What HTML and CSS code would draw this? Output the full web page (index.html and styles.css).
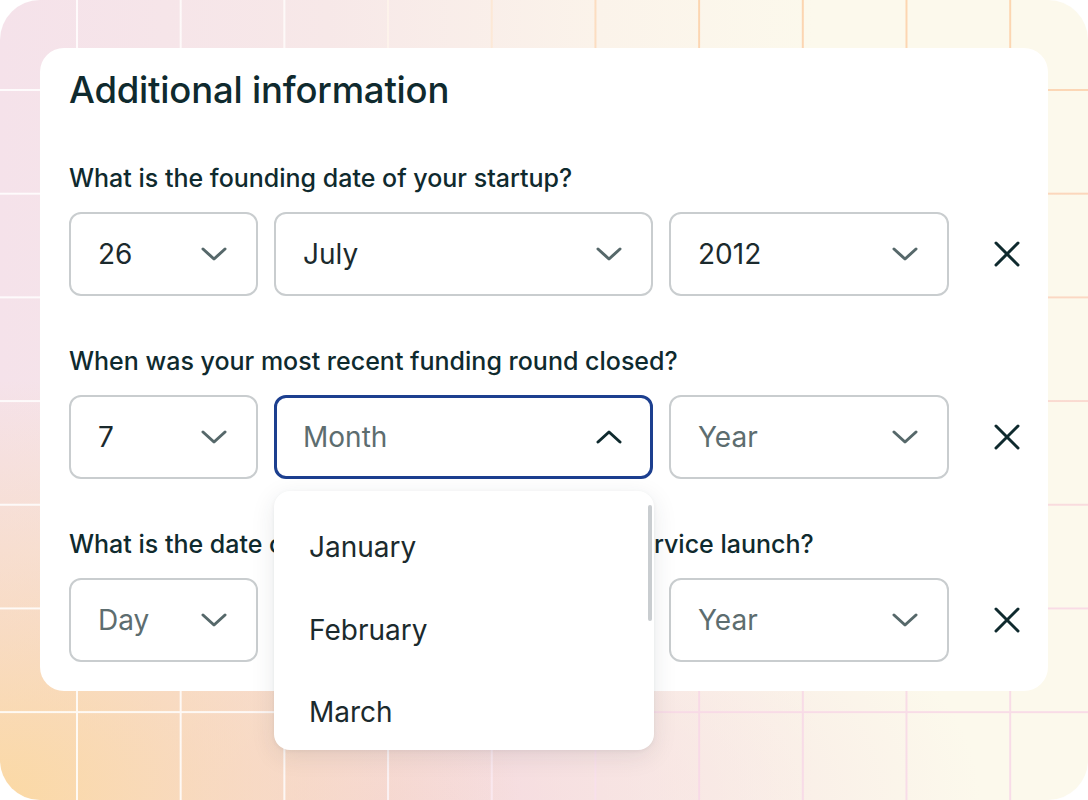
FILE: index.html
```html
<!DOCTYPE html>
<html lang="en">
<head>
<meta charset="utf-8">
<title>Additional information</title>
<link rel="stylesheet" href="styles.css">
</head>
<body>
<div class="stage">
  <div class="grid-lines"></div>
  <div class="card">
    <h1 class="title">Additional information</h1>

    <div class="field">
      <div class="label">What is the founding date of your startup?</div>
      <div class="row">
        <div class="select day"><span class="value">26</span>
          <svg class="chev" viewBox="0 0 26 14"><path d="M2 2 L13 12 L24 2"/></svg></div>
        <div class="select month"><span class="value">July</span>
          <svg class="chev" viewBox="0 0 26 14"><path d="M2 2 L13 12 L24 2"/></svg></div>
        <div class="select year"><span class="value">2012</span>
          <svg class="chev" viewBox="0 0 26 14"><path d="M2 2 L13 12 L24 2"/></svg></div>
        <svg class="clear" viewBox="0 0 28 28"><path d="M3 3 L25 25 M25 3 L3 25"/></svg>
      </div>
    </div>

    <div class="field">
      <div class="label">When was your most recent funding round closed?</div>
      <div class="row">
        <div class="select day"><span class="value">7</span>
          <svg class="chev" viewBox="0 0 26 14"><path d="M2 2 L13 12 L24 2"/></svg></div>
        <div class="select month focused"><span class="placeholder">Month</span>
          <svg class="chev up" viewBox="0 0 26 14"><path d="M2 12 L13 2 L24 12"/></svg>
          <div class="dropdown">
            <div class="option">January</div>
            <div class="option">February</div>
            <div class="option">March</div>
            <div class="scrollbar"></div>
          </div>
        </div>
        <div class="select year"><span class="placeholder">Year</span>
          <svg class="chev" viewBox="0 0 26 14"><path d="M2 2 L13 12 L24 2"/></svg></div>
        <svg class="clear" viewBox="0 0 28 28"><path d="M3 3 L25 25 M25 3 L3 25"/></svg>
      </div>
    </div>

    <div class="field">
      <div class="label">What is the date of your very first product and service launch?</div>
      <div class="row">
        <div class="select day"><span class="placeholder">Day</span>
          <svg class="chev" viewBox="0 0 26 14"><path d="M2 2 L13 12 L24 2"/></svg></div>
        <div class="select month"><span class="placeholder">Month</span>
          <svg class="chev" viewBox="0 0 26 14"><path d="M2 2 L13 12 L24 2"/></svg></div>
        <div class="select year"><span class="placeholder">Year</span>
          <svg class="chev" viewBox="0 0 26 14"><path d="M2 2 L13 12 L24 2"/></svg></div>
        <svg class="clear" viewBox="0 0 28 28"><path d="M3 3 L25 25 M25 3 L3 25"/></svg>
      </div>
    </div>
  </div>
</div>
</body>
</html>
```

FILE: styles.css
```css
* { box-sizing: border-box; }

html, body {
  margin: 0;
  padding: 0;
  background: #ffffff;
}

body {
  width: 1088px;
  height: 800px;
  overflow: hidden;
  font-family: Inter, "Noto Sans", sans-serif;
  color: #0f2a2e;
}

.stage {
  position: relative;
  width: 1088px;
  height: 800px;
  border-radius: 40px;
  overflow: hidden;
  padding: 48px 40px 0 40px;
  background:
    radial-gradient(ellipse 520px 420px at 0% 100%, #fbd9a4 0%, rgba(250, 216, 170, 0.6) 40%, rgba(246, 216, 220, 0) 100%),
    radial-gradient(ellipse 600px 300px at 35% 100%, rgba(244, 214, 220, 0.9) 0%, rgba(244, 214, 220, 0) 100%),
    linear-gradient(to right, #f5e2ea 0%, #f7e8e8 30%, #fbf3ea 55%, #fcf9ec 75%, #fcf9ec 100%);
}

.grid-lines {
  position: absolute;
  inset: 0;
  opacity: 0.85;
  background:
    linear-gradient(to right, rgba(255, 255, 255, 1) 0%, rgba(255, 255, 255, 0.95) 30%, rgba(255, 255, 255, 0) 62%),
    linear-gradient(to bottom, #fcd0a6 0%, #fbd3bb 35%, #f8d8e4 70%, #f8d8e8 100%);
  -webkit-mask-image:
    linear-gradient(to right, #000 0, #000 1.5px, transparent 1.5px),
    linear-gradient(to bottom, #000 0, #000 1.5px, transparent 1.5px);
  -webkit-mask-size: 103.7px 103.7px, 103.7px 103.7px;
  -webkit-mask-position: 76px 89px, 76px 89px;
  mask-image:
    linear-gradient(to right, #000 0, #000 1.5px, transparent 1.5px),
    linear-gradient(to bottom, #000 0, #000 1.5px, transparent 1.5px);
  mask-size: 103.7px 103.7px, 103.7px 103.7px;
  mask-position: 76px 89px, 76px 89px;
}

.card {
  position: relative;
  width: 1008px;
  background: #ffffff;
  border-radius: 24px;
  padding: 22px 0 29px 29px;
}

.title {
  margin: 0;
  font-size: 36.5px;
  line-height: 40px;
  font-weight: 500;
  letter-spacing: -0.2px;
  color: #0f2a2e;
}

.field {
  display: flex;
  flex-direction: column;
  gap: 20px;
  margin-top: 51px;
}

.field:first-of-type {
  margin-top: 54px;
}

.label {
  font-size: 25px;
  line-height: 28px;
  font-weight: 500;
  color: #0f2a2e;
  white-space: nowrap;
}

.row {
  display: flex;
  align-items: center;
  gap: 16px;
}

.select {
  position: relative;
  flex: 0 0 auto;
  height: 84px;
  border: 2px solid #c9cdcf;
  border-radius: 12px;
  display: flex;
  align-items: center;
  justify-content: space-between;
  padding: 0 29px 0 27px;
  background: #ffffff;
}

.select.day { width: 189px; }
.select.month { width: 379px; }
.select.year { width: 280px; }

.select.focused {
  border: 3px solid #1c3f8f;
  padding: 0 28px 0 26px;
}

.value, .placeholder {
  font-size: 28px;
  line-height: 34px;
  font-weight: 400;
}

.value { color: #1b2a2d; }
.placeholder { color: #5d6d6f; }

.chev {
  flex: 0 0 auto;
  width: 26px;
  height: 14px;
  fill: none;
  stroke: #56686a;
  stroke-width: 3;
  stroke-linecap: round;
  stroke-linejoin: round;
}

.chev.up { stroke: #0f2a2e; }

.clear {
  flex: 0 0 auto;
  width: 28px;
  height: 28px;
  margin-left: 28px;
  fill: none;
  stroke: #0f2a2e;
  stroke-width: 3;
  stroke-linecap: round;
}

.dropdown {
  position: absolute;
  top: 93px;
  left: -3px;
  width: 380px;
  height: 259px;
  background: #ffffff;
  border-radius: 16px;
  box-shadow: 0 6px 24px rgba(40, 50, 60, 0.10), 0 1px 4px rgba(40, 50, 60, 0.06);
  padding: 15px 0 0 35px;
  z-index: 5;
}

.option {
  height: 82.5px;
  display: flex;
  align-items: center;
  font-size: 28px;
  font-weight: 400;
  color: #1b2a2d;
}

.scrollbar {
  position: absolute;
  top: 14px;
  right: 2px;
  width: 4px;
  height: 116px;
  border-radius: 2px;
  background: #c9cdd0;
}
```
